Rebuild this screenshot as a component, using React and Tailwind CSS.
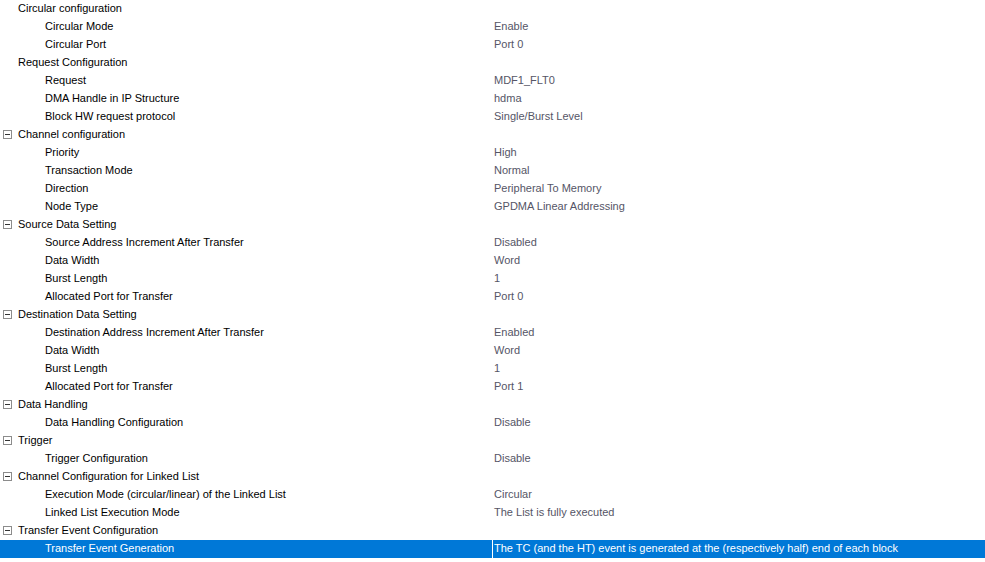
const rows = [
  { h: "Circular configuration", icon: false },
  { l: "Circular Mode", v: "Enable" },
  { l: "Circular Port", v: "Port 0" },
  { h: "Request Configuration", icon: false },
  { l: "Request", v: "MDF1_FLT0" },
  { l: "DMA Handle in IP Structure", v: "hdma" },
  { l: "Block HW request protocol", v: "Single/Burst Level" },
  { h: "Channel configuration", icon: true },
  { l: "Priority", v: "High" },
  { l: "Transaction Mode", v: "Normal" },
  { l: "Direction", v: "Peripheral To Memory" },
  { l: "Node Type", v: "GPDMA Linear Addressing" },
  { h: "Source Data Setting", icon: true },
  { l: "Source Address Increment After Transfer", v: "Disabled" },
  { l: "Data Width", v: "Word" },
  { l: "Burst Length", v: "1" },
  { l: "Allocated Port for Transfer", v: "Port 0" },
  { h: "Destination Data Setting", icon: true },
  { l: "Destination Address Increment After Transfer", v: "Enabled" },
  { l: "Data Width", v: "Word" },
  { l: "Burst Length", v: "1" },
  { l: "Allocated Port for Transfer", v: "Port 1" },
  { h: "Data Handling", icon: true },
  { l: "Data Handling Configuration", v: "Disable" },
  { h: "Trigger", icon: true },
  { l: "Trigger Configuration", v: "Disable" },
  { h: "Channel Configuration for Linked List", icon: true },
  { l: "Execution Mode (circular/linear) of the Linked List", v: "Circular" },
  { l: "Linked List Execution Mode", v: "The List is fully executed" },
  { h: "Transfer Event Configuration", icon: true },
  {
    l: "Transfer Event Generation",
    v: "The TC (and the HT) event is generated at the (respectively half) end of each block",
    sel: true,
  },
];

function MinusBox() {
  return (
    <svg width="9" height="9" viewBox="0 0 9 9" className="block">
      <rect x="0.5" y="0.5" width="8" height="8" fill="#fff" stroke="#8c8c8c" />
      <line x1="2" y1="4.5" x2="7" y2="4.5" stroke="#333" />
    </svg>
  );
}

export default function App() {
  return (
    <div
      className="h-[562px] w-[985px] overflow-hidden bg-white text-[11px] leading-[16px]"
      style={{ fontFamily: '"Liberation Sans", Arial, sans-serif' }}
    >
      {rows.map((r, i) =>
        r.h ? (
          <div key={i} className="flex h-[18px] items-start text-black">
            <div className="flex h-[16px] w-[18px] items-center pl-[3px]">
              {r.icon && <MinusBox />}
            </div>
            <span className="whitespace-nowrap">{r.h}</span>
          </div>
        ) : (
          <div
            key={i}
            className={
              r.sel
                ? "flex h-[18px] items-stretch bg-[#0078d7] text-white"
                : "flex h-[18px] items-stretch"
            }
          >
            <div
              className={
                r.sel
                  ? "w-[492px] whitespace-nowrap pl-[45px] text-white"
                  : "w-[492px] whitespace-nowrap pl-[45px] text-black"
              }
            >
              {r.l}
            </div>
            <div
              className={
                r.sel
                  ? "flex-1 whitespace-nowrap border-l border-white pl-[1px] text-white"
                  : "flex-1 whitespace-nowrap border-l border-transparent pl-[1px] text-[#555566]"
              }
            >
              {r.v}
            </div>
          </div>
        )
      )}
    </div>
  );
}
